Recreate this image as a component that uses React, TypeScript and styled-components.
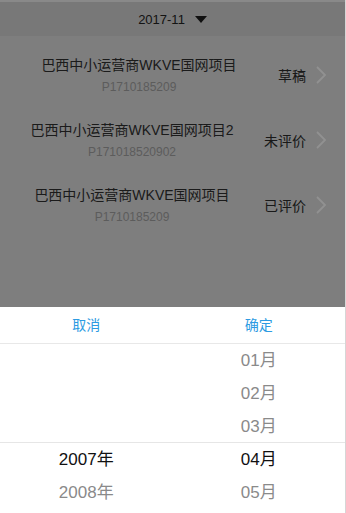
import React from 'react';
import styled, { createGlobalStyle } from 'styled-components';

const GlobalStyle = createGlobalStyle`
  html, body {
    margin: 0;
    padding: 0;
    background: #ffffff;
    overflow: hidden;
  }
  * {
    box-sizing: border-box;
  }
  body {
    font-family: "Liberation Sans", "Noto Sans CJK SC", sans-serif;
  }
`;

interface Project {
  name: string;
  code: string;
  status: string;
}

const projects: Project[] = [
  { name: '巴西中小运营商WKVE国网项目', code: 'P1710185209', status: '草稿' },
  { name: '巴西中小运营商WKVE国网项目2', code: 'P171018520902', status: '未评价' },
  { name: '巴西中小运营商WKVE国网项目', code: 'P1710185209', status: '已评价' },
];

const years = ['', '', '', '2007年', '2008年'];
const months = ['01月', '02月', '03月', '04月', '05月'];
const SELECTED = 3;

const Shell = styled.div`
  width: 346px;
  height: 513px;
  display: flex;
  flex-direction: column;
  border-right: 1px solid #d6d6d6;
  overflow: hidden;
`;

const Page = styled.div`
  position: relative;
  height: 307px;
  background: #d2d2d2;
  display: flex;
  flex-direction: column;
  flex-shrink: 0;
`;

const Mask = styled.div`
  position: absolute;
  inset: 0;
  background: rgba(0, 0, 0, 0.4);
`;

const MonthBar = styled.div`
  height: 36px;
  border-top: 2px solid #e4e4e4;
  background: #c9c9c9;
  display: flex;
  align-items: center;
  justify-content: center;
  gap: 10px;
  font-size: 13px;
  color: #222;
`;

const Caret = styled.span`
  width: 0;
  height: 0;
  border-left: 6px solid transparent;
  border-right: 6px solid transparent;
  border-top: 7px solid #1c1c1c;
  margin-top: 1px;
`;

const List = styled.div`
  padding-top: 6px;
  display: flex;
  flex-direction: column;
`;

const Row = styled.div`
  height: 65px;
  padding: 13px 18px 0 0;
  display: flex;
  align-items: flex-start;
`;

const Info = styled.div`
  flex: 1;
  text-align: center;
`;

const Title = styled.div`
  font-size: 14px;
  line-height: 20px;
  color: #2e2e2e;
`;

const Code = styled.div`
  margin-top: 3px;
  font-size: 12px;
  line-height: 18px;
  color: #9a9a9a;
`;

const Status = styled.div`
  align-self: center;
  margin-top: -13px;
  font-size: 14px;
  color: #2a2a2a;
  display: flex;
  align-items: center;
  gap: 9px;
`;

const Sheet = styled.div`
  flex: 1;
  background: #ffffff;
  display: flex;
  flex-direction: column;
`;

const SheetHeader = styled.div`
  height: 37px;
  padding-bottom: 3px;
  display: grid;
  grid-template-columns: 1fr 1fr;
  align-items: center;
  border-bottom: 1px solid #e8e8e8;
`;

const HeaderButton = styled.span`
  text-align: center;
  font-size: 14px;
  color: #2d9be2;
`;

const Wheels = styled.div`
  position: relative;
  display: grid;
  grid-template-columns: 1fr 1fr;
`;

const Wheel = styled.div`
  display: flex;
  flex-direction: column;
`;

const Option = styled.div<{ $active?: boolean }>`
  height: 33px;
  line-height: 33px;
  text-align: center;
  font-size: 17px;
  color: ${({ $active }) => ($active ? '#111111' : '#8a8a8a')};
`;

const SelectLine = styled.div`
  position: absolute;
  left: 0;
  right: 0;
  top: ${SELECTED * 33 - 1}px;
  height: 1px;
  background: #e6e6e6;
`;

const Chevron = () => (
  <svg width="12" height="20" viewBox="0 0 12 20" fill="none">
    <polyline points="2,2 10,10 2,18" stroke="#f2f2f2" strokeWidth="1.8" />
  </svg>
);

const App: React.FC = () => {
  return (
    <>
      <GlobalStyle />
      <Shell>
        <Page>
          <MonthBar>
            <span>2017-11</span>
            <Caret />
          </MonthBar>
          <List>
            {projects.map((p, i) => (
              <Row key={i}>
                <Info>
                  <Title>{p.name}</Title>
                  <Code>{p.code}</Code>
                </Info>
                <Status>
                  {p.status}
                  <Chevron />
                </Status>
              </Row>
            ))}
          </List>
          <Mask />
        </Page>
        <Sheet>
          <SheetHeader>
            <HeaderButton>取消</HeaderButton>
            <HeaderButton>确定</HeaderButton>
          </SheetHeader>
          <Wheels>
            <SelectLine />
            <Wheel>
              {years.map((y, i) => (
                <Option key={i} $active={i === SELECTED}>
                  {y}
                </Option>
              ))}
            </Wheel>
            <Wheel>
              {months.map((m, i) => (
                <Option key={i} $active={i === SELECTED}>
                  {m}
                </Option>
              ))}
            </Wheel>
          </Wheels>
        </Sheet>
      </Shell>
    </>
  );
};

export default App;
